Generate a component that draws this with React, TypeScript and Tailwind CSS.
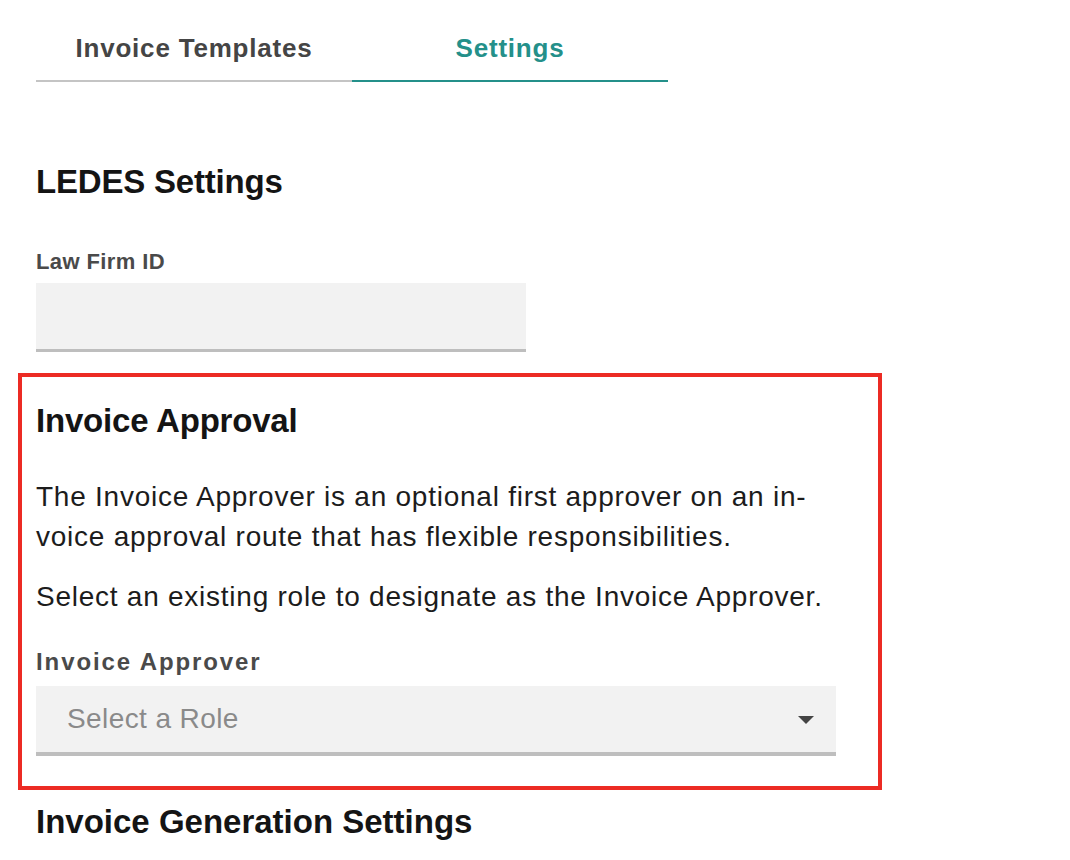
import React from "react";

export default function App() {
  return (
    <div
      className="min-h-[860px] w-[1070px] bg-white pl-[36px] text-[#161616]"
      style={{ fontFamily: '"Liberation Sans", Arial, Helvetica, sans-serif' }}
    >
      {/* Tabs */}
      <div className="flex w-[632px] border-b-2 border-[#c4c4c4]">
        <button className="flex w-[316px] justify-center pt-[33px] pb-[17px] text-[26px] font-bold leading-[30px] tracking-[0.8px] text-[#454545]">
          Invoice Templates
        </button>
        <button className="-mb-[2px] flex w-[316px] justify-center border-b-2 border-[#24908a] pt-[33px] pb-[17px] text-[26px] font-bold leading-[30px] tracking-[0.8px] text-[#24908a]">
          Settings
        </button>
      </div>

      {/* LEDES */}
      <h2 className="mt-[80px] text-[33px] font-bold leading-[40px] tracking-[-0.2px] text-[#141414]">
        LEDES Settings
      </h2>
      <label className="mt-[47px] block text-[22px] font-bold leading-[26px] tracking-[0.4px] text-[#4a4a4a]">
        Law Firm ID
      </label>
      <div className="mt-[8px] h-[69px] w-[490px] border-b-[3px] border-[#bebebe] bg-[#f2f2f2]" />

      {/* Invoice Approval (highlighted) */}
      <div className="mt-[21px] -ml-[18px] w-[864px] border-4 border-[#ec2b24] pt-[24px] pb-[30px] pl-[14px]">
        <h2 className="text-[33px] font-bold leading-[40px] tracking-[-0.2px] text-[#141414]">
          Invoice Approval
        </h2>
        <p className="mt-[36px] text-[28px] leading-[40px] tracking-[0.75px] text-[#1c1c1c]">
          The Invoice Approver is an optional first approver on an in-
          <br />
          voice approval route that has flexible responsibilities.
        </p>
        <p className="mt-[20px] text-[28px] leading-[40px] tracking-[0.75px] text-[#1c1c1c]">
          Select an existing role to designate as the Invoice Approver.
        </p>
        <label className="mt-[31px] block text-[24px] font-bold leading-[28px] tracking-[1.9px] text-[#4a4a4a]">
          Invoice Approver
        </label>
        <div className="mt-[10px] flex h-[70px] w-[800px] items-center justify-between border-b-[4px] border-[#bebebe] bg-[#f2f2f2] pl-[31px] pr-[22px]">
          <span className="text-[28px] leading-[30px] tracking-[0.4px] text-[#8a8a8a]">
            Select a Role
          </span>
          <svg width="16" height="8" viewBox="0 0 16 8" className="mt-[2px]">
            <path d="M0 0 L16 0 L8 8 Z" fill="#444444" />
          </svg>
        </div>
      </div>

      <h2 className="mt-[12px] text-[33px] font-bold leading-[40px] text-[#141414]">
        Invoice Generation Settings
      </h2>
    </div>
  );
}
